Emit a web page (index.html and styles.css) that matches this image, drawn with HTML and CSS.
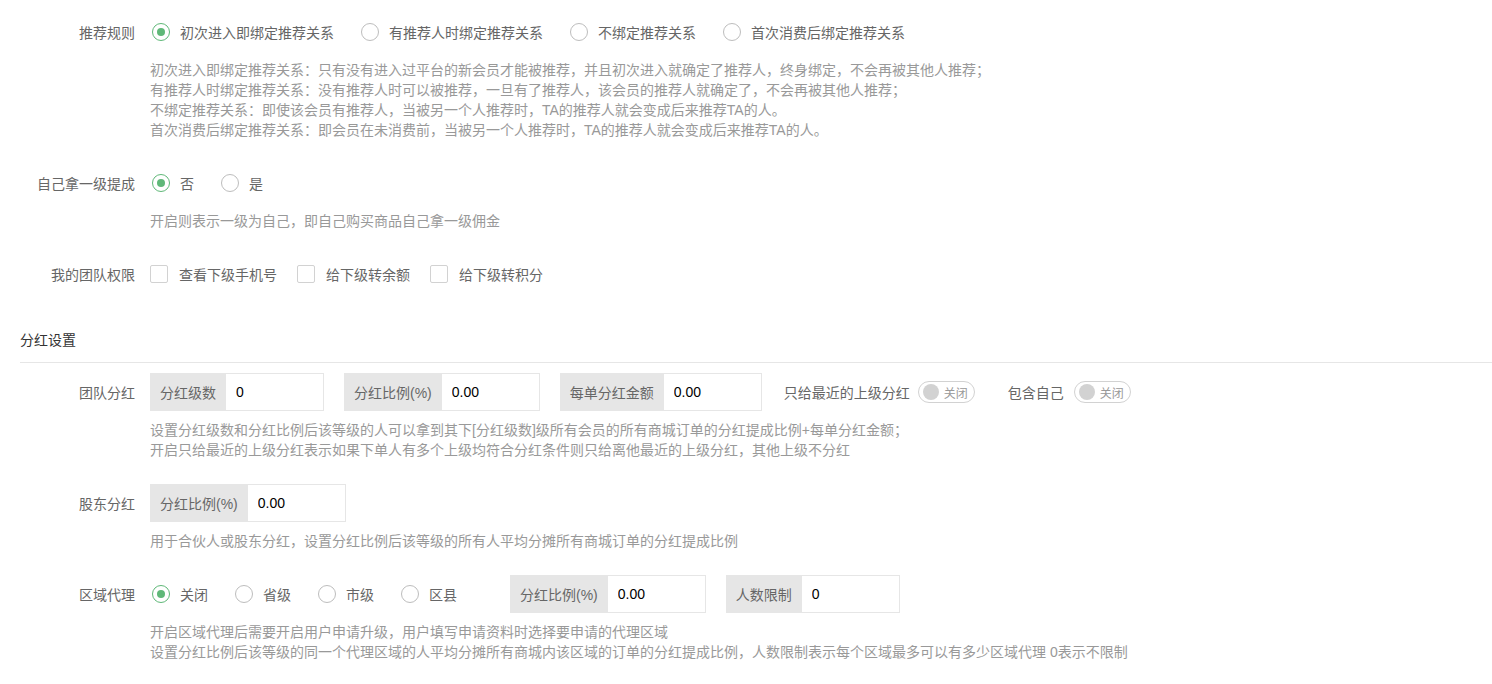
FILE: index.html
```html
<!DOCTYPE html>
<html lang="zh-CN">
<head>
    <meta charset="UTF-8">
    <title>分红设置</title>
    <link rel="stylesheet" href="styles.css">
</head>
<body>
<div class="form">

    <div class="form-item">
        <div class="row">
            <label class="form-label">推荐规则</label>
            <span class="radio checked"><i></i>初次进入即绑定推荐关系</span>
            <span class="radio"><i></i>有推荐人时绑定推荐关系</span>
            <span class="radio"><i></i>不绑定推荐关系</span>
            <span class="radio"><i></i>首次消费后绑定推荐关系</span>
        </div>
        <div class="help">
            初次进入即绑定推荐关系：只有没有进入过平台的新会员才能被推荐，并且初次进入就确定了推荐人，终身绑定，不会再被其他人推荐；<br>
            有推荐人时绑定推荐关系：没有推荐人时可以被推荐，一旦有了推荐人，该会员的推荐人就确定了，不会再被其他人推荐；<br>
            不绑定推荐关系：即使该会员有推荐人，当被另一个人推荐时，TA的推荐人就会变成后来推荐TA的人。<br>
            首次消费后绑定推荐关系：即会员在未消费前，当被另一个人推荐时，TA的推荐人就会变成后来推荐TA的人。
        </div>
    </div>

    <div class="form-item">
        <div class="row">
            <label class="form-label">自己拿一级提成</label>
            <span class="radio checked"><i></i>否</span>
            <span class="radio"><i></i>是</span>
        </div>
        <div class="help">开启则表示一级为自己，即自己购买商品自己拿一级佣金</div>
    </div>

    <div class="form-item">
        <div class="row">
            <label class="form-label">我的团队权限</label>
            <span class="checkbox"><i></i>查看下级手机号</span>
            <span class="checkbox"><i></i>给下级转余额</span>
            <span class="checkbox"><i></i>给下级转积分</span>
        </div>
    </div>

    <div class="section-title">分红设置</div>

    <div class="form-item">
        <div class="row">
            <label class="form-label">团队分红</label>
            <div class="input-group">
                <span class="addon">分红级数</span>
                <input class="input" type="text" value="0">
            </div>
            <div class="input-group">
                <span class="addon">分红比例(%)</span>
                <input class="input" type="text" value="0.00">
            </div>
            <div class="input-group">
                <span class="addon">每单分红金额</span>
                <input class="input" type="text" value="0.00">
            </div>
            <span class="switch-label">只给最近的上级分红</span>
            <span class="switch"><i></i>关闭</span>
            <span class="switch-label wide">包含自己</span>
            <span class="switch"><i></i>关闭</span>
        </div>
        <div class="help">
            设置分红级数和分红比例后该等级的人可以拿到其下[分红级数]级所有会员的所有商城订单的分红提成比例+每单分红金额；<br>
            开启只给最近的上级分红表示如果下单人有多个上级均符合分红条件则只给离他最近的上级分红，其他上级不分红
        </div>
    </div>

    <div class="form-item">
        <div class="row">
            <label class="form-label">股东分红</label>
            <div class="input-group">
                <span class="addon">分红比例(%)</span>
                <input class="input" type="text" value="0.00">
            </div>
        </div>
        <div class="help">用于合伙人或股东分红，设置分红比例后该等级的所有人平均分摊所有商城订单的分红提成比例</div>
    </div>

    <div class="form-item">
        <div class="row">
            <label class="form-label">区域代理</label>
            <span class="radio checked"><i></i>关闭</span>
            <span class="radio"><i></i>省级</span>
            <span class="radio"><i></i>市级</span>
            <span class="radio"><i></i>区县</span>
            <div class="input-group push">
                <span class="addon">分红比例(%)</span>
                <input class="input" type="text" value="0.00">
            </div>
            <div class="input-group">
                <span class="addon">人数限制</span>
                <input class="input" type="text" value="0">
            </div>
        </div>
        <div class="help">
            开启区域代理后需要开启用户申请升级，用户填写申请资料时选择要申请的代理区域<br>
            设置分红比例后该等级的同一个代理区域的人平均分摊所有商城内该区域的订单的分红提成比例，人数限制表示每个区域最多可以有多少区域代理 0表示不限制
        </div>
    </div>

</div>
</body>
</html>
```

FILE: styles.css
```css
body {
    margin: 0;
    background: #fff;
    font-family: "Liberation Sans", "Noto Sans CJK SC", sans-serif;
    font-size: 14px;
    color: #666;
}

.form {
    padding: 13px 0 0 20px;
}

.form-item {
    margin-bottom: 24px;
}

.row {
    display: flex;
    align-items: center;
    height: 38px;
}

.form-label {
    width: 115px;
    margin-right: 15px;
    text-align: right;
    white-space: nowrap;
    color: #666;
}

.help {
    margin: 9px 0 0 130px;
    font-size: 14px;
    line-height: 20px;
    color: #999;
}

/* radio */
.radio {
    display: flex;
    align-items: center;
    margin-right: 25px;
    padding-left: 2px;
}

.radio i {
    flex: none;
    width: 16px;
    height: 16px;
    border: 1px solid #bdbdbd;
    border-radius: 50%;
    margin-right: 10px;
    position: relative;
}

.radio.checked i {
    border-color: #5fb878;
}

.radio.checked i::after {
    content: "";
    position: absolute;
    left: 4px;
    top: 4px;
    width: 8px;
    height: 8px;
    border-radius: 50%;
    background: #5fb878;
}

/* checkbox */
.checkbox {
    display: flex;
    align-items: center;
    margin-right: 20px;
}

.checkbox i {
    flex: none;
    width: 16px;
    height: 16px;
    border: 1px solid #d2d2d2;
    border-radius: 2px;
    margin-right: 11px;
}

.section-title {
    color: #333;
    line-height: 20px;
    padding: 13px 0 12px;
    border-bottom: 1px solid #e6e6e6;
    margin-bottom: 10px;
}

/* input group */
.input-group {
    display: flex;
    height: 38px;
    margin-right: 20px;
}

.input-group.push {
    margin-left: 28px;
}

.addon {
    display: flex;
    align-items: center;
    padding: 0 10px;
    background: #e6e6e6;
    color: #666;
    white-space: nowrap;
}

.input {
    width: 98px;
    box-sizing: border-box;
    height: 38px;
    border: 1px solid #e6e6e6;
    border-left: none;
    padding: 0 10px;
    font-family: inherit;
    font-size: 14px;
    color: #000;
    outline: none;
}

/* switch */
.switch-label {
    margin: 0 8px 0 2px;
    white-space: nowrap;
}

.switch-label.wide {
    margin-left: 33px;
    margin-right: 10px;
}

.switch {
    display: flex;
    align-items: center;
    box-sizing: border-box;
    width: 57px;
    height: 22px;
    border: 1px solid #d2d2d2;
    border-radius: 20px;
    padding-left: 4px;
    font-size: 12px;
    color: #999;
}

.switch i {
    flex: none;
    width: 16px;
    height: 16px;
    border-radius: 50%;
    background: #d2d2d2;
    margin-right: 5px;
}
```
